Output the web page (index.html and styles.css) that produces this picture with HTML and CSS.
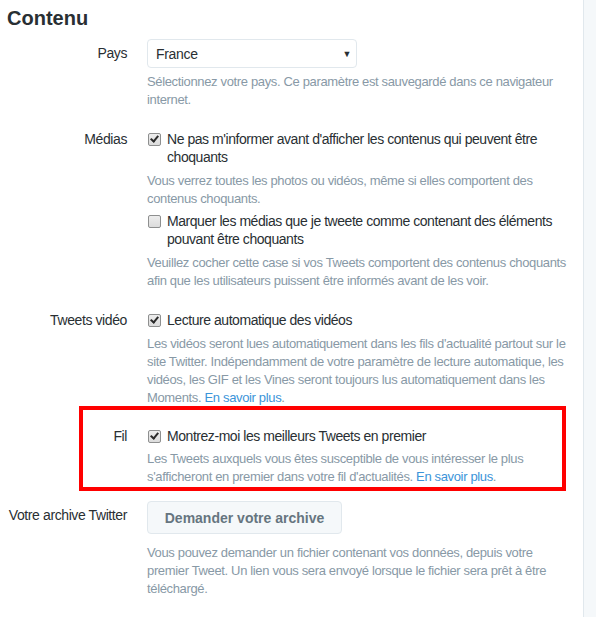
FILE: index.html
```html
<!DOCTYPE html>
<html lang="fr">
<head>
<meta charset="utf-8">
<title>Contenu</title>
<link rel="stylesheet" href="styles.css">
</head>
<body>
<div class="page">
  <main class="main">
    <h2 class="title">Contenu</h2>

    <div class="row row-pays">
      <div class="label label-field">Pays</div>
      <div class="control">
        <div class="select"><span>France</span><span class="arrow">&#9660;</span></div>
        <p class="help help-select">Sélectionnez votre pays. Ce paramètre est sauvegardé dans ce navigateur internet.</p>
      </div>
    </div>

    <div class="row">
      <div class="label">Médias</div>
      <div class="control">
        <div class="check"><span class="box checked"></span><span class="check-text">Ne pas m'informer avant d'afficher les contenus qui peuvent être choquants</span></div>
        <p class="help">Vous verrez toutes les photos ou vidéos, même si elles comportent des contenus choquants.</p>
        <div class="check check-2"><span class="box"></span><span class="check-text">Marquer les médias que je tweete comme contenant des éléments pouvant être choquants</span></div>
        <p class="help">Veuillez cocher cette case si vos Tweets comportent des contenus choquants afin que les utilisateurs puissent être informés avant de les voir.</p>
      </div>
    </div>

    <div class="row">
      <div class="label">Tweets vidéo</div>
      <div class="control">
        <div class="check"><span class="box checked"></span><span class="check-text">Lecture automatique des vidéos</span></div>
        <p class="help">Les vidéos seront lues automatiquement dans les fils d'actualité partout sur le site Twitter. Indépendamment de votre paramètre de lecture automatique, les vidéos, les GIF et les Vines seront toujours lus automatiquement dans les Moments. <a href="#">En savoir plus</a>.</p>
      </div>
    </div>

    <div class="highlight">
      <div class="row row-fil">
        <div class="label">Fil</div>
        <div class="control">
          <div class="check"><span class="box checked"></span><span class="check-text">Montrez-moi les meilleurs Tweets en premier</span></div>
          <p class="help help-fil">Les Tweets auxquels vous êtes susceptible de vous intéresser le plus s'afficheront en premier dans votre fil d'actualités. <a href="#">En savoir plus</a>.</p>
        </div>
      </div>
    </div>

    <div class="row row-archive">
      <div class="label label-field">Votre archive Twitter</div>
      <div class="control">
        <button class="btn" type="button">Demander votre archive</button>
        <p class="help help-btn">Vous pouvez demander un fichier contenant vos données, depuis votre premier Tweet. Un lien vous sera envoyé lorsque le fichier sera prêt à être téléchargé.</p>
      </div>
    </div>
  </main>
  <aside class="side"></aside>
</div>
</body>
</html>
```

FILE: styles.css
```css
html, body {
  margin: 0;
  padding: 0;
  background: #fff;
}
body {
  font-family: "Liberation Sans", Arial, sans-serif;
  color: #292f33;
  font-size: 14px;
  line-height: 18px;
}
.page {
  display: flex;
  min-height: 617px;
}
.main {
  width: 583px;
  flex: none;
}
.side {
  flex: 1;
  background: #f5f8fa;
  border-left: 1px solid #e1e8ed;
}
.title {
  margin: 6px 0 0 7px;
  font-size: 20px;
  line-height: 24px;
  font-weight: bold;
  color: #292f33;
}
.row {
  display: grid;
  grid-template-columns: 127px 420px;
  column-gap: 20px;
  margin-top: 21px;
}
.row-pays {
  margin-top: 9px;
}
.label {
  text-align: right;
  color: #292f33;
  letter-spacing: -0.4px;
}
.label-field {
  padding-top: 5px;
}
.control {
  min-width: 0;
}
.check-text {
  letter-spacing: -0.45px;
}
.select {
  height: 27px;
  border: 1px solid #e1e8ed;
  border-radius: 4px;
  box-sizing: content-box;
  display: flex;
  align-items: center;
  justify-content: space-between;
  padding: 0 0 0 8px;
  width: 200px;
  color: #292f33;
  letter-spacing: -0.3px;
}
.arrow {
  font-size: 9px;
  margin-right: 5px;
  color: #292f33;
}
.help {
  margin: 6px 0 0 0;
  font-size: 13px;
  line-height: 18px;
  color: #8899a6;
  letter-spacing: -0.35px;
}
.help-select {
  margin-top: 5px;
}
.help-fil {
  margin-top: 5px;
}
.help a {
  color: #3b94d9;
  text-decoration: none;
}
.check {
  display: flex;
  align-items: flex-start;
}
.check-2 {
  margin-top: 4px;
}
.box {
  flex: none;
  width: 11px;
  height: 11px;
  margin: 3px 6px 0 1px;
  border: 1px solid #8e8f8f;
  border-radius: 2px;
  background: linear-gradient(#ededed, #dcdcdc);
  position: relative;
}
.box.checked::after {
  content: "";
  position: absolute;
  left: 3px;
  top: 0px;
  width: 3px;
  height: 6px;
  border: solid #2b2b2b;
  border-width: 0 2px 2px 0;
  transform: rotate(40deg);
}
.highlight {
  margin: -1px 17px 0 79px;
  border: 4px solid #ff0000;
  padding: 0 0 1px 0;
}
.row-fil {
  grid-template-columns: 44px 400px;
  margin-top: 17px;
}
.row-archive {
  margin-top: 10px;
}
.btn {
  display: block;
  width: 195px;
  height: 33px;
  padding: 0;
  background: #f5f8fa;
  border: 1px solid #e1e8ed;
  border-radius: 4px;
  font-family: "Liberation Sans", Arial, sans-serif;
  font-size: 14px;
  font-weight: bold;
  color: #66757f;
}
.help-btn {
  margin-top: 10px;
}
```
